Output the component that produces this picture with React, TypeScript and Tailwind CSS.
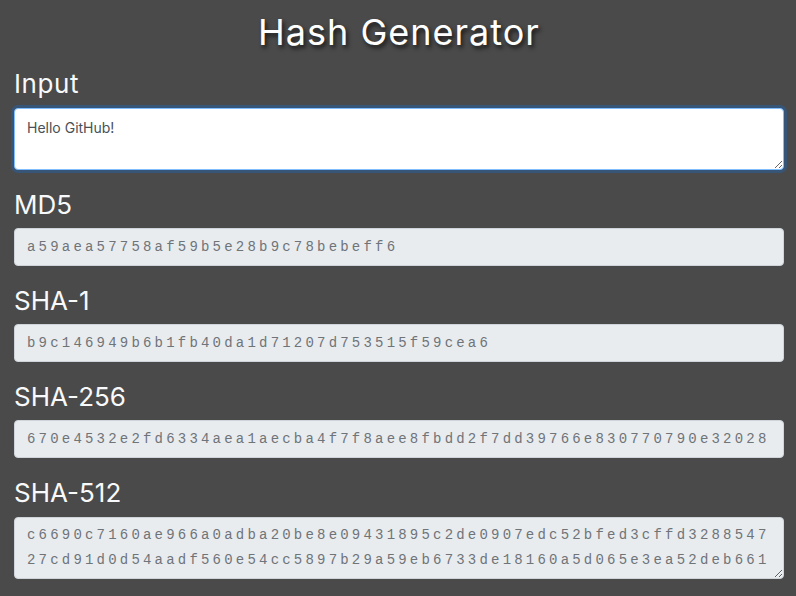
import { useState } from "react"

const hashes = [
  { label: "MD5", value: "a59aea57758af59b5e28b9c78bebeff6" },
  { label: "SHA-1", value: "b9c146949b6b1fb40da1d71207d753515f59cea6" },
  { label: "SHA-256", value: "670e4532e2fd6334aea1aecba4f7f8aee8fbdd2f7dd39766e830770790e32028" },
]

const sha512 =
  "c6690c7160ae966a0adba20be8e09431895c2de0907edc52bfed3cffd3288547" +
  "27cd91d0d54aadf560e54cc5897b29a59eb6733de18160a5d065e3ea52deb661"

const labelClass = "h-[30px] leading-[30px] text-[26px] text-[#f8f9fa] mb-[8px]"
const hashClass =
  "w-full bg-[#e9ecef] border border-[#ced4da] rounded-[4px] pl-[12px] pr-[10px] text-[#6f7479] text-[14px] tracking-[3.2px] outline-none"

export default function App() {
  const [input, setInput] = useState("Hello GitHub!")

  return (
    <div
      className="w-full min-h-[596px] bg-[#4a4a4a] pl-[14px] pr-[12px]"
      style={{ fontFamily: "Inter, 'Open Sans', sans-serif" }}
    >
      {/* Titre */}
      <h1 className="h-[69px] pb-[6px] flex items-center justify-center text-[36px] tracking-[1px] text-white [text-shadow:2px_3px_4px_rgba(0,0,0,0.7)]">
        Hash Generator
      </h1>

      {/* Entrée */}
      <div className="mb-[20px]">
        <div className={`${labelClass} mb-[9px] tracking-[0.6px]`}>Input</div>
        <textarea
          value={input}
          onChange={(e) => setInput(e.target.value)}
          className="block w-full h-[62px] bg-white border border-[#80bdff] rounded-[4px] px-[12px] py-[8px] text-[14px] text-[#495057] outline-none shadow-[0_0_0_3px_rgba(0,123,255,0.25)]"
        />
      </div>

      {hashes.map((h) => (
        <div key={h.label} className="mb-[20px]">
          <div className={labelClass}>{h.label}</div>
          <input
            readOnly
            value={h.value}
            className={`${hashClass} block h-[38px]`}
            style={{ fontFamily: "'Liberation Mono', monospace" }}
          />
        </div>
      ))}

      <div>
        <div className={`${labelClass} mb-[9px]`}>SHA-512</div>
        <textarea
          readOnly
          value={sha512}
          className={`${hashClass} block h-[62px] py-[5px] leading-[25px] break-all`}
          style={{ fontFamily: "'Liberation Mono', monospace" }}
        />
      </div>
    </div>
  )
}
